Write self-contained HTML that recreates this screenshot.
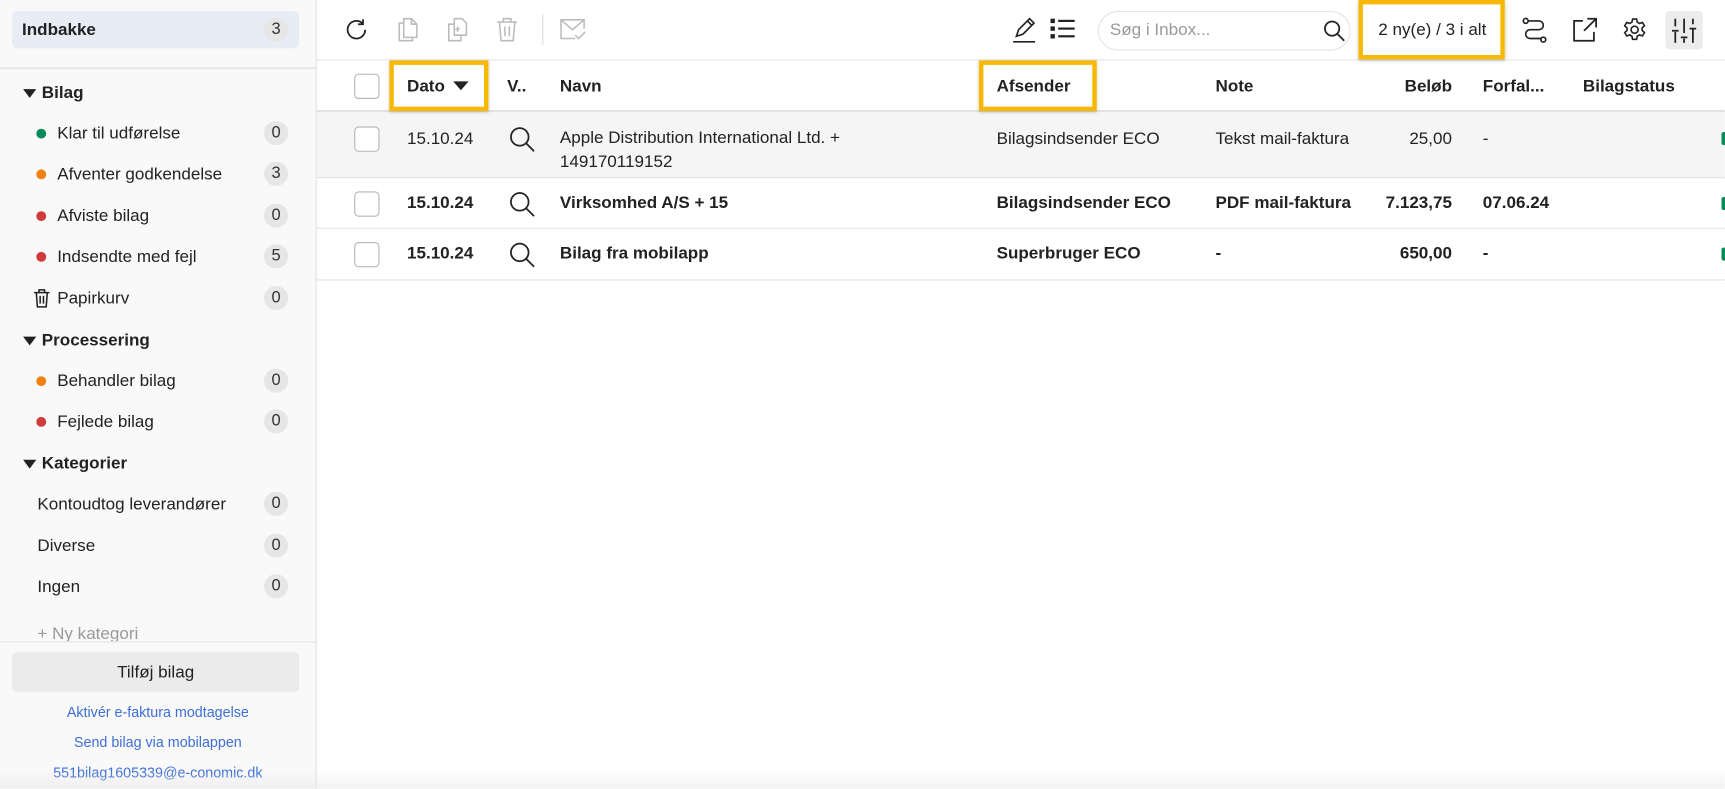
<!DOCTYPE html>
<html><head><meta charset="utf-8"><style>
*{box-sizing:border-box;margin:0;padding:0}
html,body{width:1725px;height:789px;overflow:hidden;background:#fff}
#w{width:1568px;height:717px;transform:scale(1.1);transform-origin:0 0;position:relative;font-family:"Liberation Sans",Arial,sans-serif;color:#222;font-size:15.5px}
.a{position:absolute}
#side{left:0;top:0;width:288px;height:717px;background:#f9f9f9;border-right:1px solid #e3e3e3;overflow:hidden}
.badge{position:absolute;left:240px;width:22px;height:22px;border-radius:11px;background:#e6e6e6;text-align:center;line-height:22px;font-size:15px;color:#333}
.it{position:absolute;left:0;width:287px;height:30px;line-height:30px}
.it span.t{position:absolute;left:52px;top:1px}
.dot{position:absolute;left:33px;top:11px;width:9px;height:9px;border-radius:5px}
.hd{font-weight:bold}
.hd .tri{position:absolute;left:21px;top:12px;width:0;height:0;border-left:6px solid transparent;border-right:6px solid transparent;border-top:8px solid #222}
.hd span.t{left:38px}
.lnk{position:absolute;left:0;width:287px;text-align:center;color:#3e6fd5;font-size:13px}
.row{position:absolute;left:288px;right:0;border-bottom:1px solid #e2e2e2}
.cell{position:absolute;white-space:nowrap}
.cb{position:absolute;left:34px;width:23px;height:23px;border:1px solid #b5b5b5;border-radius:4px;background:#fff}
.ybox{position:absolute;border:4px solid #f7b900;box-shadow:0 1px 3px rgba(0,0,0,.25)}
svg{position:absolute;overflow:visible}
</style></head><body><div id="w">
<div id="side" class="a">
 <div class="a" style="left:11px;top:10px;width:261px;height:34px;background:#e8ecf5;border-radius:5px"></div>
 <div class="a" style="left:20px;top:19px;font-weight:bold">Indbakke</div>
 <div class="badge" style="top:16px">3</div>
 <div class="a" style="left:0;top:61px;width:287px;height:2px;background:#e8e8e8"></div>
 <div class="it hd" style="top:69px"><i class="tri"></i><span class="t">Bilag</span></div>
 <div class="it" style="top:106px"><i class="dot" style="background:#0a8a5a"></i><span class="t">Klar til udførelse</span><b class="badge" style="top:4px;font-weight:normal">0</b></div>
 <div class="it" style="top:143px"><i class="dot" style="background:#f08012"></i><span class="t">Afventer godkendelse</span><b class="badge" style="top:4px;font-weight:normal">3</b></div>
 <div class="it" style="top:181px"><i class="dot" style="background:#d13b3b"></i><span class="t">Afviste bilag</span><b class="badge" style="top:4px;font-weight:normal">0</b></div>
 <div class="it" style="top:218px"><i class="dot" style="background:#d13b3b"></i><span class="t">Indsendte med fejl</span><b class="badge" style="top:4px;font-weight:normal">5</b></div>
 <div class="it" style="top:256px"><svg style="left:30px;top:6px" width="16" height="18" viewBox="0 0 16 18" fill="none" stroke="#222" stroke-width="1.4"><path d="M1 4h14M5.5 4V1.5h5V4M3 4l1 13h8l1-13M6.5 7v7M9.5 7v7"/></svg><span class="t">Papirkurv</span><b class="badge" style="top:4px;font-weight:normal">0</b></div>
 <div class="it hd" style="top:294px"><i class="tri"></i><span class="t">Processering</span></div>
 <div class="it" style="top:331px"><i class="dot" style="background:#f08012"></i><span class="t">Behandler bilag</span><b class="badge" style="top:4px;font-weight:normal">0</b></div>
 <div class="it" style="top:368px"><i class="dot" style="background:#d13b3b"></i><span class="t">Fejlede bilag</span><b class="badge" style="top:4px;font-weight:normal">0</b></div>
 <div class="it hd" style="top:406px"><i class="tri"></i><span class="t">Kategorier</span></div>
 <div class="it" style="top:443px"><span class="t" style="left:34px">Kontoudtog leverandører</span><b class="badge" style="top:4px;font-weight:normal">0</b></div>
 <div class="it" style="top:481px"><span class="t" style="left:34px">Diverse</span><b class="badge" style="top:4px;font-weight:normal">0</b></div>
 <div class="it" style="top:518px"><span class="t" style="left:34px">Ingen</span><b class="badge" style="top:4px;font-weight:normal">0</b></div>
 <div class="a" style="left:34px;top:567px;color:#999;height:16px;overflow:hidden;line-height:19px">+ Ny kategori</div>
 <div class="a" style="left:0;top:583px;width:287px;height:1px;background:#e3e3e3"></div>
 <div class="a" style="left:11px;top:593px;width:261px;height:36px;background:#ebebeb;border-radius:4px;text-align:center;line-height:37px">Tilføj bilag</div>
 <div class="lnk" style="top:640px">Aktivér e-faktura modtagelse</div>
 <div class="lnk" style="top:667px">Send bilag via mobilappen</div>
 <div class="lnk" style="top:695px">551bilag1605339@e-conomic.dk</div>
</div>
<div class="a" style="left:0;top:700px;width:1568px;height:17px;background:linear-gradient(rgba(255,255,255,0),rgba(230,230,230,.5))"></div>

<div class="a" style="left:288px;top:54px;width:1280px;height:1px;background:#e3e3e3"></div>
<svg style="left:313px;top:16px" width="22" height="22" viewBox="0 0 22 22" fill="none" stroke="#222" stroke-width="1.6"><path d="M19 11a8 8 0 1 1-2.5-5.8"/><path d="M17 1.5v4.5h-4.5"/></svg>
<svg style="left:361px;top:15px" width="20" height="24" viewBox="0 0 20 24" fill="none" stroke="#bbb" stroke-width="1.4"><path d="M6 2h7l5 5v12H6z M13 2v5h5"/><path d="M6 6H2v16h12v-3"/></svg>
<svg style="left:405px;top:15px" width="22" height="24" viewBox="0 0 22 24" fill="none" stroke="#bbb" stroke-width="1.4"><path d="M8 2h7l4 4v11H8z"/><path d="M8 7H3v15h11v-5"/><path d="M11 9v5M9 11.5h4" /></svg>
<svg style="left:451px;top:15px" width="20" height="24" viewBox="0 0 20 24" fill="none" stroke="#bbb" stroke-width="1.4"><path d="M1 5h18M6.5 5V2h7v3M3 5l1.5 17h11L17 5M8 9v9M12 9v9"/></svg>
<div class="a" style="left:493px;top:13px;width:1px;height:28px;background:#ddd"></div>
<svg style="left:509px;top:17px" width="24" height="20" viewBox="0 0 24 20" fill="none" stroke="#bbb" stroke-width="1.4"><path d="M22 9V1H1v17h13M1 1l10.5 9L22 1M14 15l3 3 6-6"/></svg>
<svg style="left:920px;top:16px" width="22" height="24" viewBox="0 0 22 24" fill="none" stroke="#222" stroke-width="1.5"><path d="M4 17l2-6L16 1l4 4L10 15z M14 3l4 4"/><path d="M1 22h20"/></svg>
<svg style="left:955px;top:16px" width="22" height="20" viewBox="0 0 22 20" fill="#222"><rect x="0" y="1" width="4" height="4"/><rect x="0" y="8" width="4" height="4"/><rect x="0" y="15" width="4" height="4"/><rect x="7" y="2" width="15" height="2"/><rect x="7" y="9" width="15" height="2"/><rect x="7" y="16" width="15" height="2"/></svg>
<div class="a" style="left:998px;top:10px;width:230px;height:36px;border:1px solid #e3e3e3;border-radius:18px"></div>
<div class="a" style="left:1009px;top:19px;color:#999">Søg i Inbox...</div>
<svg style="left:1203px;top:18px" width="20" height="20" viewBox="0 0 20 20" fill="none" stroke="#222" stroke-width="1.6"><circle cx="8" cy="8" r="6.5"/><path d="M13 13l6 6"/></svg>
<div class="ybox" style="left:1235px;top:0;width:133px;height:54px"></div>
<div class="a" style="left:1253px;top:19px">2 ny(e) / 3 i alt</div>
<svg style="left:1384px;top:16px" width="22" height="24" viewBox="0 0 22 24" fill="none" stroke="#222" stroke-width="1.5"><circle cx="3" cy="3" r="2.2"/><circle cx="19" cy="20" r="2.2"/><path d="M5 3h10a4 4 0 0 1 0 8H7a4 4 0 0 0 0 8h10"/></svg>
<svg style="left:1430px;top:16px" width="22" height="22" viewBox="0 0 22 22" fill="none" stroke="#222" stroke-width="1.6"><path d="M9 3H1v18h18v-8"/><path d="M13 1h8v8M21 1L10 12"/></svg>
<svg style="left:1475px;top:16px" width="22" height="22" viewBox="0 0 24 24" fill="none" stroke="#222" stroke-width="1.6"><circle cx="12" cy="12" r="3.5"/><path d="M10 1.5h4l.6 3 2.3 1.3 2.9-1 2 3.4-2.3 2v2.6l2.3 2-2 3.4-2.9-1-2.3 1.3-.6 3h-4l-.6-3-2.3-1.3-2.9 1-2-3.4 2.3-2v-2.6l-2.3-2 2-3.4 2.9 1 2.3-1.3z"/></svg>
<div class="a" style="left:1514px;top:10px;width:34px;height:35px;background:#ececec;border-radius:4px"></div>
<svg style="left:1520px;top:16px" width="22" height="24" viewBox="0 0 22 24" fill="none" stroke="#222" stroke-width="1.6"><path d="M3 1v7M3 13v10M0 12h6M11 1v13M11 19v4M8 18h6M19 1v5M19 10v13M16 10h6"/></svg>

<div class="row" style="top:55px;height:47px;border-bottom:2px solid #e2e2e2"></div>
<div class="row" style="top:102px;height:60px;background:#f5f5f5"></div>
<div class="row" style="top:162px;height:46px"></div>
<div class="row" style="top:208px;height:47px"></div>
<div class="cb" style="left:322px;top:67px"></div>
<div class="cb" style="left:322px;top:115px"></div>
<div class="cb" style="left:322px;top:174px"></div>
<div class="cb" style="left:322px;top:220px"></div>
<div class="ybox" style="left:354px;top:55px;width:90px;height:46px"></div>
<div class="ybox" style="left:890px;top:55px;width:107px;height:46px"></div>
<div style="font-weight:bold">
<div class="cell" style="left:370px;top:70px">Dato</div>
<div class="a" style="left:412px;top:74px;border-left:7px solid transparent;border-right:7px solid transparent;border-top:8px solid #222"></div>
<div class="cell" style="left:461px;top:70px">V..</div>
<div class="cell" style="left:509px;top:70px">Navn</div>
<div class="cell" style="left:906px;top:70px">Afsender</div>
<div class="cell" style="left:1105px;top:70px">Note</div>
<div class="cell" style="left:1220px;top:70px;width:100px;text-align:right">Beløb</div>
<div class="cell" style="left:1348px;top:70px">Forfal...</div>
<div class="cell" style="left:1439px;top:70px">Bilagstatus</div>
</div>
<div class="cell" style="left:370px;top:118px">15.10.24</div>
<div class="cell" style="left:509px;line-height:22px;top:115px">Apple Distribution International Ltd. +<br>149170119152</div>
<div class="cell" style="left:906px;top:118px">Bilagsindsender ECO</div>
<div class="cell" style="left:1105px;top:118px">Tekst mail-faktura</div>
<div class="cell" style="left:1220px;top:118px;width:100px;text-align:right">25,00</div>
<div class="cell" style="left:1348px;top:118px">-</div>
<div style="font-weight:bold">
<div class="cell" style="left:370px;top:176px">15.10.24</div>
<div class="cell" style="left:509px;top:176px">Virksomhed A/S + 15</div>
<div class="cell" style="left:906px;top:176px">Bilagsindsender ECO</div>
<div class="cell" style="left:1105px;top:176px">PDF mail-faktura</div>
<div class="cell" style="left:1220px;top:176px;width:100px;text-align:right">7.123,75</div>
<div class="cell" style="left:1348px;top:176px">07.06.24</div>
<div class="cell" style="left:370px;top:222px">15.10.24</div>
<div class="cell" style="left:509px;top:222px">Bilag fra mobilapp</div>
<div class="cell" style="left:906px;top:222px">Superbruger ECO</div>
<div class="cell" style="left:1105px;top:222px">-</div>
<div class="cell" style="left:1220px;top:222px;width:100px;text-align:right">650,00</div>
<div class="cell" style="left:1348px;top:222px">-</div>
</div>
<svg style="left:463px;top:115px" width="24" height="24" viewBox="0 0 24 24" fill="none" stroke="#222" stroke-width="1.6"><circle cx="9.5" cy="9.5" r="8"/><path d="M15.5 15.5l7 7"/></svg>
<svg style="left:463px;top:174px" width="24" height="24" viewBox="0 0 24 24" fill="none" stroke="#222" stroke-width="1.6"><circle cx="9.5" cy="9.5" r="8"/><path d="M15.5 15.5l7 7"/></svg>
<svg style="left:463px;top:220px" width="24" height="24" viewBox="0 0 24 24" fill="none" stroke="#222" stroke-width="1.6"><circle cx="9.5" cy="9.5" r="8"/><path d="M15.5 15.5l7 7"/></svg>
<div class="a" style="left:1565px;top:120px;width:4px;height:12px;border-radius:4px;background:#0a8a5a"></div>
<div class="a" style="left:1565px;top:179px;width:4px;height:12px;border-radius:4px;background:#0a8a5a"></div>
<div class="a" style="left:1565px;top:225px;width:4px;height:12px;border-radius:4px;background:#0a8a5a"></div>
</div></body></html>
